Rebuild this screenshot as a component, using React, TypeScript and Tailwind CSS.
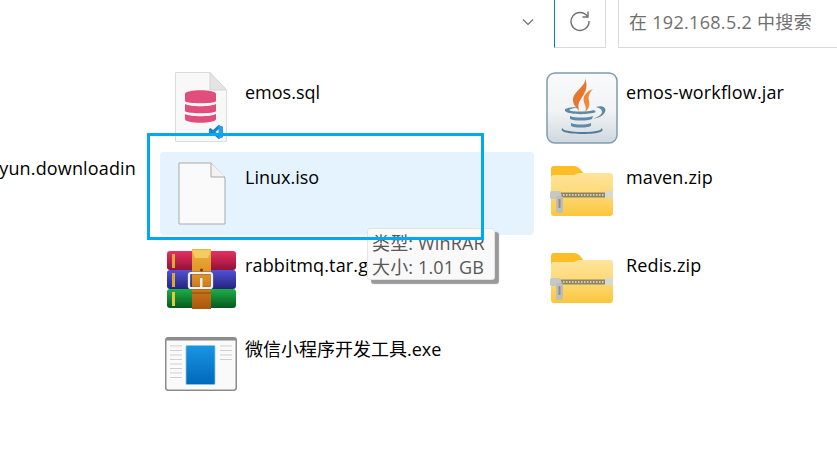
import type { ReactNode } from "react";

function SqlIcon() {
  return (
    <svg width="52" height="70" viewBox="0 0 52 70" className="block">
      <path d="M.5.5H35L51.5 18V69.5H.5Z" fill="#f8f8f8" stroke="#dcdcdc" />
      <path d="M35 .5V18H51.5Z" fill="#e4e4e4" stroke="#d6d6d6" />
      <path d="M10 22c0-5 31-5 31 0v7c0 3-31 3-31 0Z" fill="#e14d7c" />
      <path d="M10 32c5 3 26 3 31 0v7c0 3-31 3-31 0Z" fill="#e14d7c" />
      <path d="M10 42c5 3 26 3 31 0v5c0 5-31 5-31 0Z" fill="#e14d7c" />
      <path d="M43.500 53 48 55V65L43.500 67 38 62 35.500 64 34 63V57L35.500 56 38 58Z" fill="#1a86d0" />
      <path d="M44 57 40.500 60 44 63Z" fill="#f8f8f8" />
      <path d="M43.500 53 48 55V65L43.500 67Z" fill="#2b9fe6" />
    </svg>
  );
}

function BlankIcon() {
  return (
    <svg width="48" height="63" viewBox="0 0 48 63" className="block">
      <path d="M1 1H33L47 16V62H1Z" fill="#fafafa" stroke="#a9a9a9" />
      <path d="M33 1V15H47" fill="#f2f2f2" stroke="#a9a9a9" />
    </svg>
  );
}

function JavaIcon() {
  return (
    <svg width="72" height="72" viewBox="0 0 72 72" className="block">
      <defs>
        <linearGradient id="javaBg" x1="0" y1="0" x2="0" y2="1">
          <stop offset="0" stopColor="#f8fafb" />
          <stop offset="0.55" stopColor="#f1f3f4" />
          <stop offset="1" stopColor="#cfd7dd" />
        </linearGradient>
      </defs>
      <rect x="1" y="1" width="70" height="70" rx="8" fill="url(#javaBg)" stroke="#7f9cb0" strokeWidth="1.5" />
      <path d="M39 6C41 14 27 19 27 28c0 5 4 8 6 11-1-5-1-8 2-12 3-5 8-11 4-21Z" fill="#e8772e" />
      <path d="M47 17C41 19 36 24 38 30c1 4 3 6 1 10 4-3 5-7 4-11-1-4 0-8 4-12Z" fill="#ee8a3c" />
      <path d="M19 37c6-2 10-2 14-2-5 1-9 2-10 3 3 2 18 2 25 0l2 2c-7 3-27 3-31-1Z" fill="#5f8aa5" />
      <path d="M50 35c7-2 11 1 9 5-2 4-7 6-12 7 4-2 9-4 9-7 0-3-3-4-6-5Z" fill="#5f8aa5" />
      <path d="M24 44c5 2 17 2 23 0l-1 3c-5 2-17 2-22 0Z" fill="#5f8aa5" />
      <path d="M25 51c5 2 15 2 20 0v3c-5 2-16 2-20 0Z" fill="#5f8aa5" />
      <path d="M17 56c-5 3 4 6 20 6s23-3 18-6c2 2-5 4-18 4s-22-2-20-4Z" fill="#4f7c99" />
    </svg>
  );
}

function ZipIcon({ id }: { id: string }) {
  return (
    <svg width="64" height="50" viewBox="0 0 64 50" className="block">
      <defs>
        <linearGradient id={id} x1="0" y1="0" x2="0" y2="1">
          <stop offset="0" stopColor="#ffe49a" />
          <stop offset="0.5" stopColor="#fdd975" />
          <stop offset="1" stopColor="#fbc63d" />
        </linearGradient>
      </defs>
      <path d="M1 3a3 3 0 0 1 3-3h20c3 0 5 2 7 4l3 4v8H1Z" fill="#fcbe24" />
      <path d="M1 12c0-2 1-3 3-3h20l5-2h31a3 3 0 0 1 3 3v37a3 3 0 0 1-3 3H4a3 3 0 0 1-3-3Z" fill={`url(#${id})`} />
      <rect x="10" y="26.500" width="45" height="5" fill="#8d8468" />
      <path d="M10 29h45" stroke="#ece5c8" strokeWidth="1.500" strokeDasharray="1.500 1.500" />
      <rect x="0" y="25" width="11" height="8" rx="1.500" fill="#c7c7c5" />
      <rect x="55" y="25" width="8" height="7" rx="1" fill="#d8d8d2" />
      <rect x="6" y="30" width="7" height="17" rx="2" fill="#bdbdb9" />
      <rect x="8.500" y="33" width="2" height="9" fill="#8e8e8a" />
    </svg>
  );
}

function RarIcon() {
  return (
    <svg width="72" height="62" viewBox="0 0 72 62" className="block">
      <defs>
        <linearGradient id="bookRed" x1="0" y1="0" x2="0" y2="1">
          <stop offset="0" stopColor="#e8305f" />
          <stop offset="1" stopColor="#931239" />
        </linearGradient>
        <linearGradient id="bookBlue" x1="0" y1="0" x2="0" y2="1">
          <stop offset="0" stopColor="#5252d6" />
          <stop offset="1" stopColor="#23237f" />
        </linearGradient>
        <linearGradient id="bookGreen" x1="0" y1="0" x2="0" y2="1">
          <stop offset="0" stopColor="#1fae46" />
          <stop offset="1" stopColor="#06591f" />
        </linearGradient>
        <linearGradient id="strap" x1="0" y1="0" x2="0" y2="1">
          <stop offset="0" stopColor="#efb23c" />
          <stop offset="0.5" stopColor="#d98a22" />
          <stop offset="1" stopColor="#a9560c" />
        </linearGradient>
      </defs>
      <rect x="1" y="2" width="69" height="19" rx="3" fill="url(#bookRed)" />
      <rect x="1" y="21" width="69" height="19" rx="3" fill="url(#bookBlue)" />
      <rect x="1" y="40" width="69" height="19" rx="3" fill="url(#bookGreen)" />
      <rect x="6" y="5" width="3" height="14" fill="#d9a93a" />
      <rect x="6" y="24" width="3" height="14" fill="#d9a93a" />
      <rect x="6" y="43" width="3" height="14" fill="#e0cb3a" />
      <rect x="26" y="0" width="19" height="60" fill="url(#strap)" />
      <path d="M26 1h19l-3 8H29Z" fill="#f3cc62" />
      <path d="M26 43h19v2H26Z" fill="#8a4a0a" opacity=".5" />
      <circle cx="35.500" cy="21" r="1.500" fill="#6f3b08" />
      <rect x="23" y="24" width="23" height="15" rx="2" fill="none" stroke="#5e5e5e" strokeWidth="3.500" opacity=".45" />
      <rect x="23" y="24" width="23" height="15" rx="2" fill="none" stroke="#f0f0f0" strokeWidth="2.200" />
      <rect x="34" y="29" width="2.500" height="10" fill="#f0f0f0" />
    </svg>
  );
}

function ExeIcon() {
  return (
    <svg width="72" height="54" viewBox="0 0 72 54" className="block">
      <defs>
        <linearGradient id="exeBlue" x1="0" y1="0" x2="0" y2="1">
          <stop offset="0" stopColor="#1a95e3" />
          <stop offset="1" stopColor="#0068bb" />
        </linearGradient>
      </defs>
      <rect x=".75" y=".75" width="70.500" height="52.500" rx="2.500" fill="#fafafa" stroke="#8c8c8c" strokeWidth="1.500" />
      <rect x="1" y="1" width="70" height="2.500" fill="#8c8c8c" />
      <rect x="21" y="8.500" width="29" height="39" rx="1" fill="url(#exeBlue)" stroke="#8cc4ea" strokeWidth=".75" />
      <path d="M5 9H17M5 13.500H17M5 18H17M5 22.500H17M5 27H17M5 31.500H17M5 36H17M5 40.500H17" stroke="#cfcfcf" />
      <path d="M55 9H67M55 13.500H67M55 18H67M55 22.500H67" stroke="#cfcfcf" />
    </svg>
  );
}

function Tile({ icon, label, iconTop, selected, labelPad }: { icon: ReactNode; label: string; iconTop: string; selected?: boolean; labelPad: string }) {
  return (
    <div className={`flex h-[83px] rounded-sm ${selected ? "bg-[#e5f3ff]" : ""}`}>
      <div className={`flex w-[84px] shrink-0 justify-center ${iconTop}`}>{icon}</div>
      <span className={`mt-[12px] whitespace-nowrap leading-[26px] text-black ${labelPad}`}>{label}</span>
    </div>
  );
}

export default function App() {
  return (
    <div className="relative h-[475px] w-[837px] overflow-hidden bg-white font-['Open_Sans','Noto_Sans_CJK_SC',sans-serif] text-[18px] tracking-[0.15px]">
      {/* Toolbar */}
      <div className="flex h-[48px] items-stretch text-[#6f6f6f]">
        <div className="flex w-[554px] justify-end pr-[20px] pt-[16px]">
          <svg width="12" height="12" viewBox="0 0 12 12" fill="none" stroke="#6a6a6a" strokeWidth="1.100">
            <path d="M1 3.500 6 8.500 11 3.500" />
          </svg>
        </div>
        <div className="flex w-[52px] justify-center border-r border-b border-l border-r-[#d9d9d9] border-b-[#d9d9d9] border-l-[#0078d7] pt-[10px]">
          <svg width="22" height="22" viewBox="0 0 22 22" fill="none" stroke="#6f6f6f" strokeWidth="1.400">
            <path d="M18.500 6.500A9 9 0 1 0 20 11" />
            <path d="M19 1.500V7H13.500" />
          </svg>
        </div>
        <div className="ml-[12px] flex-1 border-b border-l border-[#d9d9d9] pl-[10px] pt-[8px] leading-[28px] tracking-[0.3px]">
          在 192.168.5.2 中搜索
        </div>
      </div>

      {/* File list */}
      <div className="grid grid-cols-[160px_374px_1fr] grid-rows-[85px_88px_84px_84px] pt-[19px]">
        <div />
        <Tile icon={<SqlIcon />} label="emos.sql" iconTop="pt-[5px] pr-[2px]" labelPad="pl-[1px] tracking-normal" />
        <div className="ml-[6px]">
          <Tile icon={<JavaIcon />} label="emos-workflow.jar" iconTop="pt-[5px]" labelPad="pl-[2px]" />
        </div>
        <div className="flex justify-end overflow-hidden pr-[24px]">
          <span className="mt-[3px] whitespace-nowrap leading-[26px] text-black">yun.downloadin</span>
        </div>
        <Tile icon={<BlankIcon />} label="Linux.iso" iconTop="pt-[10px] pr-[1px]" selected labelPad="pl-[1px] tracking-normal" />
        <div className="ml-[6px]">
          <Tile icon={<ZipIcon id="zipA" />} label="maven.zip" iconTop="pt-[14px]" labelPad="pl-[2px]" />
        </div>
        <div />
        <Tile icon={<RarIcon />} label="rabbitmq.tar.gz" iconTop="pt-[9px]" labelPad="pl-[1px]" />
        <div className="ml-[6px]">
          <Tile icon={<ZipIcon id="zipB" />} label="Redis.zip" iconTop="pt-[13px]" labelPad="pl-[2px]" />
        </div>
        <div />
        <Tile icon={<ExeIcon />} label="微信小程序开发工具.exe" iconTop="pt-[13px] pr-[2px]" labelPad="pl-[1px] tracking-normal" />
      </div>

      {/* Tooltip */}
      <div className="absolute left-[367px] top-[228px] h-[52px] w-[128px] rounded-[3px] border border-[#e4e4e4] bg-[#f9f9f9] pl-[4px] pt-[2px] leading-[24px] text-[#575757] shadow-[4px_4px_1px_#9a9a9a]">
        <div>类型: WinRAR</div>
        <div>大小: 1.01 GB</div>
      </div>

      {/* Annotation box */}
      <div className="absolute left-[147px] top-[133px] h-[107px] w-[337px] border-[3px] border-[#00a9f0]" />
    </div>
  );
}
